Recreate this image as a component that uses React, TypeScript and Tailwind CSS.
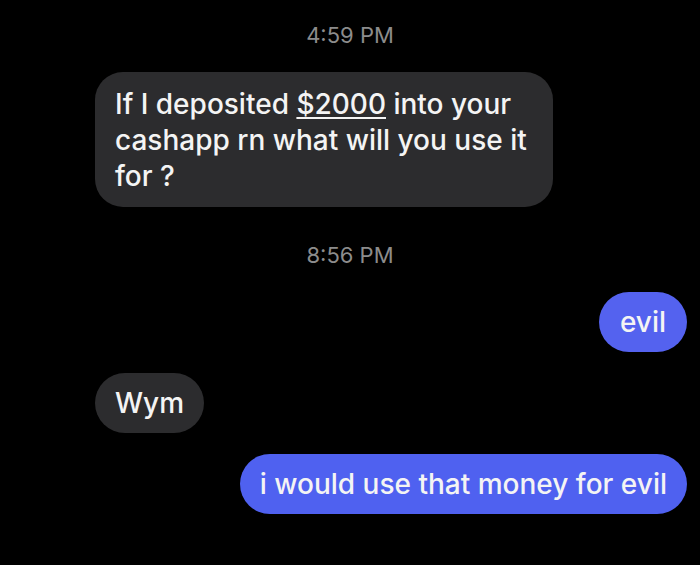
export default function App() {
  return (
    <div className="w-[700px] h-[565px] bg-black overflow-hidden flex flex-col font-['Inter',sans-serif] text-[#f4f4f4]">
      <div className="pt-[24px] flex justify-center text-[22px] leading-[22px] text-[#8c8c8c]">4:59 PM</div>

      <div className="mt-[26px] ml-[95px] w-[458px] rounded-[28px] bg-[#2c2c2e] pl-5 pr-3 pt-[14px] pb-[13px] text-[28px] leading-[36px] font-medium">
        If I deposited <span className="underline decoration-2 underline-offset-[3px]">$2000</span> into your
        <br />
        cashapp rn what will you use it
        <br />
        for ?
      </div>

      <div className="mt-[37px] flex justify-center text-[22px] leading-[22px] text-[#8c8c8c]">8:56 PM</div>

      <div className="mt-[26px] self-end mr-[13px] rounded-full bg-[#5462ef] px-[21px] py-3 text-[28px] leading-[36px] font-medium">
        evil
      </div>

      <div className="mt-[21px] self-start ml-[95px] rounded-full bg-[#2c2c2e] px-5 py-3 text-[28px] leading-[36px] font-medium">
        Wym
      </div>

      <div className="mt-[21px] self-end mr-[13px] rounded-full bg-[#4f61f0] px-5 py-3 text-[28px] leading-[36px] font-medium">
        i would use that money for evil
      </div>
    </div>
  );
}
